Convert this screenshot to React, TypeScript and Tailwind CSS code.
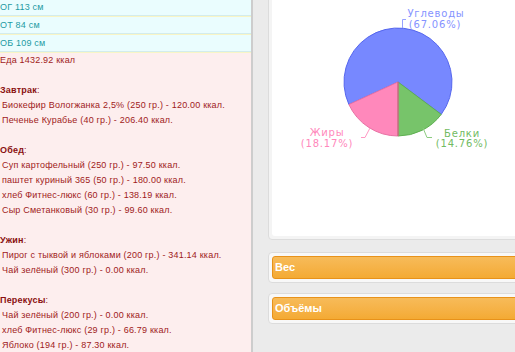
import React from "react";

type Meal = { title: string; items: string[] };

const meals: Meal[] = [
  {
    title: "Завтрак",
    items: [
      "Биокефир Вологжанка 2,5% (250 гр.) - 120.00 ккал.",
      "Печенье Курабье (40 гр.) - 206.40 ккал.",
    ],
  },
  {
    title: "Обед",
    items: [
      "Суп картофельный (250 гр.) - 97.50 ккал.",
      "паштет куриный 365 (50 гр.) - 180.00 ккал.",
      "хлеб Фитнес-люкс (60 гр.) - 138.19 ккал.",
      "Сыр Сметанковый (30 гр.) - 99.60 ккал.",
    ],
  },
  {
    title: "Ужин",
    items: [
      "Пирог с тыквой и яблоками (200 гр.) - 341.14 ккал.",
      "Чай зелёный (300 гр.) - 0.00 ккал.",
    ],
  },
  {
    title: "Перекусы",
    items: [
      "Чай зелёный (200 гр.) - 0.00 ккал.",
      "хлеб Фитнес-люкс (29 гр.) - 66.79 ккал.",
      "Яблоко (194 гр.) - 87.30 ккал.",
    ],
  },
];

const sizes = ["ОГ 113 см", "ОТ 84 см", "ОБ 109 см"];

function MacroPie() {
  // origin of the svg is the top-left of the white chart area
  return (
    <svg width="300" height="252" className="block">
      <g strokeWidth="1">
        <path
          d="M126 98 L76.9 120.5 A54 54 0 1 1 169.2 130.4 Z"
          fill="#7788ff"
          stroke="#5566ee"
        />
        <path
          d="M126 98 L169.2 130.4 A54 54 0 0 1 126 152 Z"
          fill="#77c46a"
          stroke="#5eb050"
        />
        <path
          d="M126 98 L126 152 A54 54 0 0 1 76.9 120.5 Z"
          fill="#ff88bb"
          stroke="#e872a4"
        />
        <line x1="126" y1="98" x2="126" y2="152" stroke="#b86a70" />
      </g>
      <g fill="none" strokeWidth="1">
        <path d="M130.5 44 V35.5 H134" stroke="#97a2ff" />
        <path d="M89 153.5 H93 L98 144" stroke="#ff99c4" />
        <path d="M151 144 L155 153.5 H160" stroke="#8ccb80" />
      </g>
      <g
        fontFamily="'DejaVu Sans', sans-serif"
        fontSize="10"
        letterSpacing="0.8"
        textAnchor="middle"
      >
        <text x="164" y="33" fill="#8593ff">Углеводы</text>
        <text x="163" y="44" fill="#8593ff">(67.06%)</text>
        <text x="55" y="152" fill="#ff88bb">Жиры</text>
        <text x="55" y="163" fill="#ff88bb">(18.17%)</text>
        <text x="190" y="153" fill="#72bb62">Белки</text>
        <text x="190" y="163" fill="#72bb62">(14.76%)</text>
      </g>
    </svg>
  );
}

function SectionBar({ title }: { title: string }) {
  return (
    <div className="w-[300px] rounded-[4px] border border-[#dcdcdc] bg-[#f8f8f8] p-[3px]">
      <div className="h-[23px] rounded-[3px] border border-[#e8921a] bg-linear-to-b from-[#f7bb59] to-[#f4aa33] pl-[2px] text-[11px] font-bold leading-[21px] text-white">
        {title}
      </div>
    </div>
  );
}

export default function App() {
  return (
    <div
      className="flex h-[352px] w-[515px] overflow-hidden bg-[#ebebeb]"
      style={{ fontFamily: "'Liberation Sans', Arial, sans-serif" }}
    >
      {/* left: measurements and food diary */}
      <div className="-mt-[2px] flex w-[253px] shrink-0 flex-col border-r-2 border-[#cdcdcd]">
        {sizes.map((s) => (
          <div
            key={s}
            className="h-[18px] border-t border-b border-t-[#f8f5c6] border-b-[#d3ecec] bg-[#eafdfe] text-[9px] leading-[16px] tracking-[0.2px] text-[#1d9ba3]"
          >
            {s}
          </div>
        ))}
        <div className="flex-1 border-t border-[#f8f5c6] bg-[#fdeeee] text-[9px] leading-[15px] tracking-[0.2px] text-[#a01a1a]">
          <div>Еда 1432.92 ккал</div>
          <div className="h-[15px]" />
          {meals.map((m) => (
            <div key={m.title}>
              <div>
                <span className="font-bold text-[#8a1010]">{m.title}</span>:
              </div>
              {m.items.map((it) => (
                <div key={it} className="pl-[2px]">
                  {it}
                </div>
              ))}
              <div className="h-[15px]" />
            </div>
          ))}
        </div>
      </div>

      {/* right: chart and collapsed sections */}
      <div className="-mt-[20px] flex flex-col pl-[15px]">
        <div className="w-[300px] rounded-[4px] border border-[#dcdcdc] bg-[#f4f4f4] p-[3px]">
          <div className="h-[252px] rounded-[3px] bg-white">
            <MacroPie />
          </div>
        </div>
        <div className="mt-[12px]">
          <SectionBar title="Вес" />
        </div>
        <div className="mt-[10px]">
          <SectionBar title="Объёмы" />
        </div>
      </div>
    </div>
  );
}
